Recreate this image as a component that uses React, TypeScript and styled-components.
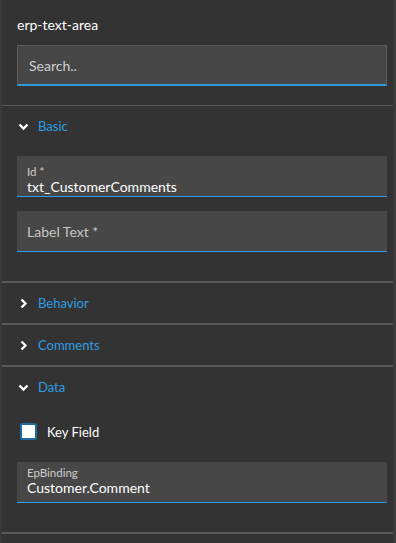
import React from "react";
import styled, { createGlobalStyle } from "styled-components";

const GlobalStyle = createGlobalStyle`
  html, body {
    margin: 0;
    padding: 0;
    background: #333333;
  }
  body {
    font-family: Lato, "Open Sans", sans-serif;
  }
`;

const Panel = styled.div`
  width: 396px;
  height: 543px;
  box-sizing: border-box;
  background: #333333;
  border-left: 2px solid #3b3b3b;
  border-right: 3px solid #3b3b3b;
  overflow: hidden;
  color: #ffffff;
`;

const Top = styled.div`
  padding: 15px 6px 19px 15px;
  border-bottom: 1px solid #5a5a5a;
`;

const Title = styled.div`
  font-size: 14px;
  line-height: 20px;
  margin-bottom: 10px;
`;

const SearchBox = styled.div`
  height: 41px;
  box-sizing: border-box;
  background: #474747;
  border: 1px solid #5c5c5c;
  border-bottom: 2px solid #2c9ad8;
  display: flex;
  align-items: center;
  padding: 0 11px;
  font-size: 14px;
  color: #cfcfcf;
`;

const Section = styled.div<{ $padBottom?: number }>`
  border-bottom: 2px solid #5a5a5a;
  padding-bottom: ${(p) => p.$padBottom ?? 0}px;
`;

const Header = styled.div`
  height: 40px;
  display: flex;
  align-items: center;
  padding-left: 16px;
  gap: 9px;
  color: #2f9ee3;
  font-size: 13px;
`;

const Body = styled.div`
  padding: 10px 6px 0 15px;
  display: flex;
  flex-direction: column;
  gap: 14px;
`;

const Field = styled.div<{ $padTop: number }>`
  height: 41px;
  box-sizing: border-box;
  background: #474747;
  border-bottom: 1px solid #22a0ee;
  padding: ${(p) => p.$padTop}px 10px 0;
  display: flex;
  flex-direction: column;
`;

const FieldLabel = styled.div`
  font-size: 11.5px;
  line-height: 13px;
  color: #cfcfcf;
`;

const FieldValue = styled.div`
  font-size: 14px;
  line-height: 17px;
  color: #ffffff;
`;

const Placeholder = styled.div`
  font-size: 14px;
  line-height: 18px;
  color: #c6c6c6;
  margin-top: 8px;
`;

const CheckRow = styled.label`
  display: flex;
  align-items: center;
  gap: 10px;
  padding: 6px 0 8px 3px;
  font-size: 13px;
  color: #ffffff;
`;

const Box = styled.span`
  width: 17px;
  height: 17px;
  box-sizing: border-box;
  background: #ffffff;
  border: 2px solid #1c6aa0;
  border-radius: 2px;
`;

const Chevron: React.FC<{ open: boolean }> = ({ open }) => (
  <svg width="11" height="11" viewBox="0 0 11 11">
    <polyline
      points={open ? "1.5,3.5 5.5,7.5 9.5,3.5" : "3.5,1.5 7.5,5.5 3.5,9.5"}
      fill="none"
      stroke="#ffffff"
      strokeWidth="2.3"
    />
  </svg>
);

const SectionHeader: React.FC<{ title: string; open: boolean }> = ({ title, open }) => (
  <Header>
    <Chevron open={open} />
    <span>{title}</span>
  </Header>
);

export default function App() {
  return (
    <>
      <GlobalStyle />
      <Panel>
        <Top>
          <Title>erp-text-area</Title>
          <SearchBox>Search..</SearchBox>
        </Top>
        <Section $padBottom={29}>
          <SectionHeader title="Basic" open />
          <Body>
            <Field $padTop={9}>
              <FieldLabel>Id *</FieldLabel>
              <FieldValue>txt_CustomerComments</FieldValue>
            </Field>
            <Field $padTop={4}>
              <Placeholder>Label Text *</Placeholder>
            </Field>
          </Body>
        </Section>
        <Section>
          <SectionHeader title="Behavior" open={false} />
        </Section>
        <Section>
          <SectionHeader title="Comments" open={false} />
        </Section>
        <Section $padBottom={29}>
          <SectionHeader title="Data" open />
          <Body>
            <CheckRow>
              <Box />
              Key Field
            </CheckRow>
            <Field $padTop={4}>
              <FieldLabel>EpBinding</FieldLabel>
              <FieldValue>Customer.Comment</FieldValue>
            </Field>
          </Body>
        </Section>
      </Panel>
    </>
  );
}
